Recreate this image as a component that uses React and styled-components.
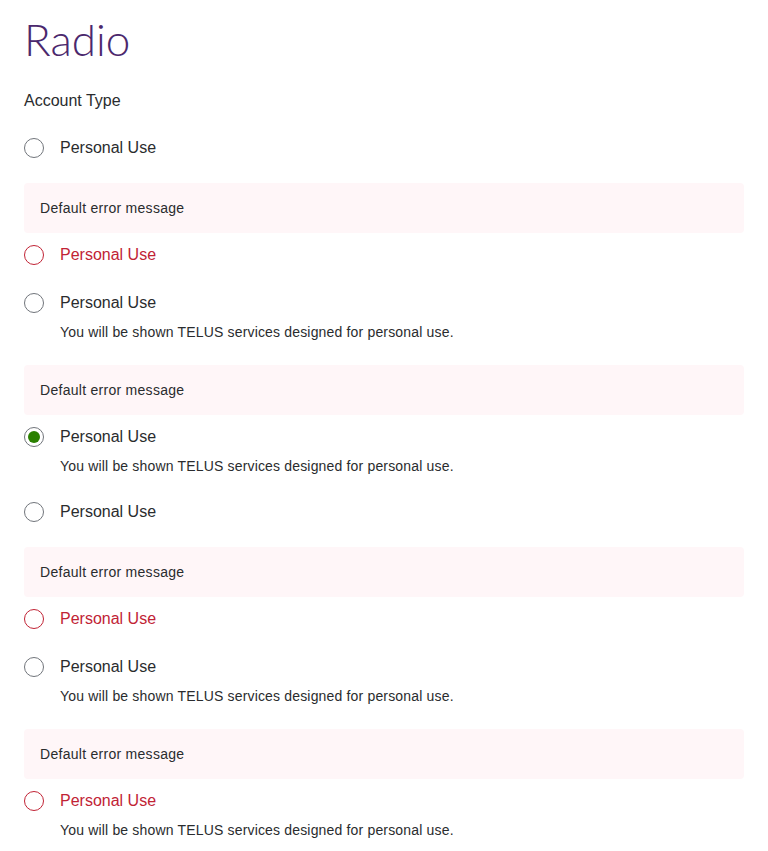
import styled, { createGlobalStyle } from "styled-components";

const Global = createGlobalStyle`
  body {
    margin: 0;
    background: #fff;
    font-family: "Liberation Sans", Arial, sans-serif;
    color: #2a2c2e;
  }
`;

const Page = styled.main`
  padding: 12px 24px 0;
  width: 720px;
`;

const Title = styled.h1`
  margin: 0;
  font-family: Lato, "Liberation Sans", sans-serif;
  font-weight: 300;
  font-size: 44px;
  line-height: 54px;
  color: #4b286d;
`;

const Legend = styled.div`
  margin-top: 23px;
  font-size: 16px;
  line-height: 24px;
`;

const List = styled.div`
  display: flex;
  flex-direction: column;
  gap: 24px;
  margin-top: 23px;
`;

const Item = styled.div`
  display: flex;
  flex-direction: column;
`;

const ErrorBox = styled.div`
  height: 50px;
  display: flex;
  align-items: center;
  padding: 0 16px;
  background: #fff6f8;
  border-radius: 4px;
  font-size: 14px;
  letter-spacing: 0.28px;
  margin: -1px 0 10px;
`;

const Row = styled.label`
  display: flex;
  align-items: center;
  gap: 16px;
  height: 24px;
  font-size: 16px;
  color: ${(p) => (p.$error ? "#c12335" : "#2a2c2e")};
`;

const Circle = styled.span`
  position: relative;
  box-sizing: border-box;
  width: 20px;
  height: 20px;
  border-radius: 50%;
  border: 1px solid ${(p) => (p.$error ? "#c12335" : "#71757b")};
  flex-shrink: 0;
  &::after {
    content: "";
    display: ${(p) => (p.$checked ? "block" : "none")};
    position: absolute;
    inset: 3px;
    border-radius: 50%;
    background: #2b8000;
  }
`;

const Desc = styled.div`
  margin-top: 7px;
  padding-left: 36px;
  font-size: 14px;
  line-height: 20px;
  letter-spacing: 0.17px;
`;

const items = [
  {},
  { error: true },
  { desc: true },
  { error: true, checked: true, desc: true, plain: true },
  {},
  { error: true },
  { desc: true },
  { error: true, desc: true },
];

const Radio = ({ error, checked, desc, plain }) => (
  <Item>
    {error && <ErrorBox>Default error message</ErrorBox>}
    <Row $error={error && !plain}>
      <Circle $error={error && !plain} $checked={checked} />
      Personal Use
    </Row>
    {desc && <Desc>You will be shown TELUS services designed for personal use.</Desc>}
  </Item>
);

export default function App() {
  return (
    <Page>
      <Global />
      <Title>Radio</Title>
      <Legend>Account Type</Legend>
      <List>
        {items.map((it, i) => (
          <Radio key={i} {...it} />
        ))}
      </List>
    </Page>
  );
}
